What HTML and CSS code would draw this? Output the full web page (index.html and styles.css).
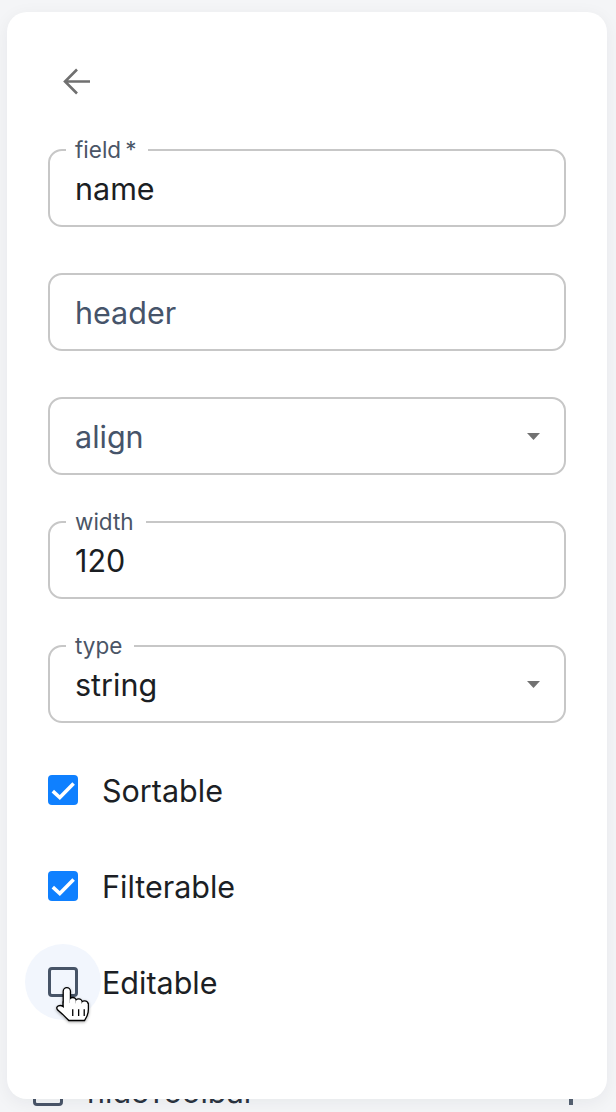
FILE: index.html
```html
<!DOCTYPE html>
<html lang="en">
<head>
<meta charset="utf-8">
<title>Column settings</title>
<link rel="stylesheet" href="styles.css">
</head>
<body>
<div class="page">
  <div class="under-row">
    <span class="under-box"></span>
    <span class="under-label">hideToolbar</span>
    <svg class="under-plus" width="28" height="28" viewBox="0 0 28 28"><path d="M14 0V28M0 14H28" stroke="#566171" stroke-width="4" fill="none"/></svg>
  </div>
</div>

<div class="popover">
  <button class="back" type="button" aria-label="Back">
    <svg width="28" height="28" viewBox="0 0 28 28"><path d="M27 13.5H2.5M14 1.5L2 13.5L14 25.5" stroke="#707070" stroke-width="2.6" fill="none"/></svg>
  </button>

  <div class="fields">
    <div class="field">
      <span class="label">field&thinsp;*</span>
      <span class="value">name</span>
    </div>
    <div class="field">
      <span class="placeholder">header</span>
    </div>
    <div class="field">
      <span class="placeholder">align</span>
      <svg class="caret" width="13" height="7" viewBox="0 0 13 7"><path d="M0 0H13L6.5 7Z" fill="#727272"/></svg>
    </div>
    <div class="field">
      <span class="label">width</span>
      <span class="value">120</span>
    </div>
    <div class="field">
      <span class="label">type</span>
      <span class="value">string</span>
      <svg class="caret" width="13" height="7" viewBox="0 0 13 7"><path d="M0 0H13L6.5 7Z" fill="#727272"/></svg>
    </div>
  </div>

  <div class="checks">
    <div class="check">
      <span class="box checked"><svg width="30" height="30" viewBox="0 0 30 30"><path d="M4.8 16.2L11.8 22.6L25.6 8.6" stroke="#fff" stroke-width="3.6" fill="none"/></svg></span>
      <span class="check-label">Sortable</span>
    </div>
    <div class="check">
      <span class="box checked"><svg width="30" height="30" viewBox="0 0 30 30"><path d="M4.8 16.2L11.8 22.6L25.6 8.6" stroke="#fff" stroke-width="3.6" fill="none"/></svg></span>
      <span class="check-label">Filterable</span>
    </div>
    <div class="check">
      <span class="box hovered"></span>
      <span class="check-label">Editable</span>
    </div>
  </div>

  <svg class="cursor" width="42" height="42" viewBox="0 0 32 32">
    <g stroke="#000" stroke-width="2" fill="#000">
      <rect x="6" y="1" width="4.5" height="15" rx="2.25"/>
      <rect x="10.5" y="8.5" width="4.5" height="10" rx="2.25"/>
      <rect x="15" y="9.5" width="4.5" height="9" rx="2.25"/>
      <rect x="19.5" y="11" width="4.5" height="8" rx="2.25"/>
      <path d="M6 12L24 13L24 19Q23.5 22 21.5 25L10 25Q8 23 5.5 20.5L1.5 17Q0.5 15.5 2 14.8Q3.6 14.2 5 15.2L6 16Z"/>
    </g>
    <g fill="#fff">
      <rect x="6" y="1" width="4.5" height="15" rx="2.25"/>
      <rect x="10.5" y="8.5" width="4.5" height="10" rx="2.25"/>
      <rect x="15" y="9.5" width="4.5" height="9" rx="2.25"/>
      <rect x="19.5" y="11" width="4.5" height="8" rx="2.25"/>
      <path d="M6 12L24 13L24 19Q23.5 22 21.5 25L10 25Q8 23 5.5 20.5L1.5 17Q0.5 15.5 2 14.8Q3.6 14.2 5 15.2L6 16Z"/>
    </g>
    <path d="M12.75 17V22M17.25 17V22M21.5 17V22" stroke="#000" stroke-width="1"/>
  </svg>
</div>
</body>
</html>
```

FILE: styles.css
```css
html, body {
  margin: 0;
  padding: 0;
}

body {
  width: 616px;
  height: 1112px;
  overflow: hidden;
  background: #f4f5f7;
  font-family: Inter, "Noto Sans", "Liberation Sans", sans-serif;
  position: relative;
}

/* underlying page, mostly hidden by the popover */
.page {
  padding: 1076px 31px 0 33px;
}

.under-row {
  display: flex;
  align-items: center;
  height: 30px;
}

.under-box {
  width: 30px;
  height: 30px;
  box-sizing: border-box;
  border: 3px solid #4a5568;
  border-radius: 4px;
}

.under-label {
  margin-left: 24px;
  font-size: 30.5px;
  color: #2b3340;
}

.under-plus {
  margin-left: auto;
}

/* popover card */
.popover {
  position: absolute;
  left: 7px;
  top: 12px;
  z-index: 1;
  width: 600px;
  box-sizing: border-box;
  padding: 56px 41px 102px;
  background: #fff;
  border-radius: 20px;
  box-shadow: 0 4px 18px rgba(20, 30, 50, 0.06);
}

.back {
  display: block;
  margin: 0 0 0 15px;
  padding: 0;
  border: 0;
  background: none;
  width: 28px;
  height: 28px;
}

.back svg {
  display: block;
}

.fields {
  display: flex;
  flex-direction: column;
  gap: 46px;
  margin-top: 53px;
}

.field {
  position: relative;
  height: 78px;
  box-sizing: border-box;
  border: 2px solid #c7c7c7;
  border-radius: 14px;
  display: flex;
  align-items: center;
  padding: 0 25px;
  font-size: 30.5px;
}

.label {
  position: absolute;
  left: 16px;
  top: -15px;
  padding: 0 12px 0 9px;
  background: #fff;
  font-size: 22.5px;
  line-height: 27px;
  color: #4a5566;
}

.value {
  color: #1b1e23;
}

.placeholder {
  color: #46546a;
}

.caret {
  margin-left: auto;
  margin-right: -1px;
}

.checks {
  display: flex;
  flex-direction: column;
  gap: 66px;
  margin-top: 52px;
}

.check {
  display: flex;
  align-items: center;
  height: 30px;
}

.box {
  position: relative;
  width: 30px;
  height: 30px;
  box-sizing: border-box;
  border-radius: 4px;
  flex: none;
}

.box.checked {
  background: #0f80ff;
}

.box.checked svg {
  display: block;
}

.box.hovered {
  border: 3px solid #475467;
}

.box.hovered::before {
  content: "";
  position: absolute;
  left: -26px;
  top: -26px;
  width: 76px;
  height: 76px;
  border-radius: 50%;
  background: #f2f6fd;
  z-index: -1;
}

.check-label {
  margin-left: 24px;
  font-size: 30.5px;
  color: #1c1f25;
}

.cursor {
  position: absolute;
  left: 49px;
  top: 975px;
  filter: drop-shadow(0 1px 1.5px rgba(0, 0, 0, 0.35));
}
```
